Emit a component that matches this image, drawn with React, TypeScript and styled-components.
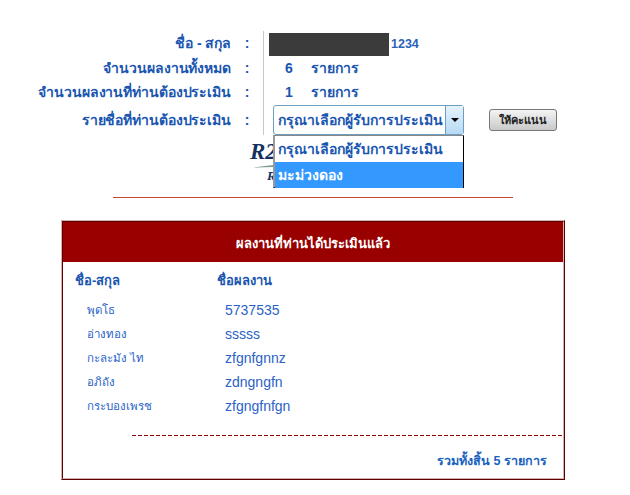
import styled, { createGlobalStyle } from 'styled-components';

const Global = createGlobalStyle`
    html, body {
        margin: 0;
        padding: 0;
        background: #fff;
        font-family: Tahoma, "Liberation Sans", "Noto Sans", "DejaVu Sans", sans-serif;
    }
`;

const Page = styled.div`
    width: 630px;
    height: 495px;
    overflow: hidden;
    padding-top: 31px;
    box-sizing: border-box;
`;

const Form = styled.div`
    display: grid;
    grid-template-columns: 231px 32px auto;
    height: 104px;
`;

const LabelCol = styled.div`
    display: flex;
    flex-direction: column;
    align-items: flex-end;
    padding-top: 3px;
`;

const ColonCol = styled(LabelCol)`
    align-items: center;
`;

const Label = styled.div<{ h: number }>`
    height: ${(props) => props.h}px;
    line-height: 18px;
    font-size: 14px;
    letter-spacing: -0.1px;
    font-weight: bold;
    color: #1a56b0;
    white-space: nowrap;
`;

const ValueCol = styled.div`
    border-left: 1px solid #c8c8c8;
    padding-left: 5px;
    position: relative;
`;

const NameRow = styled.div`
    display: flex;
    align-items: center;
    height: 24px;
    margin-top: 1px;
`;

const Redacted = styled.div`
    width: 120px;
    height: 23px;
    background: #3c3b3c;
    margin-right: 2px;
`;

const Code = styled.span`
    font-size: 12.5px;
    font-weight: bold;
    color: #2a62b8;
`;

const CountRow = styled.div`
    display: flex;
    height: 24px;
    line-height: 24px;
    font-size: 14px;
    font-weight: bold;
    color: #1a56b0;
`;

const Count = styled.span`
    width: 42px;
    padding-left: 16px;
    box-sizing: border-box;
`;

const SelectRow = styled.div`
    display: flex;
    align-items: center;
    margin: 1px 0 0 4px;
`;

const SelectBox = styled.div`
    width: 191px;
    height: 30px;
    box-sizing: border-box;
    border: 1px solid #6f9fc0;
    border-radius: 3px;
    display: flex;
    background: #fff;
`;

const SelectText = styled.div`
    flex: 1;
    padding-left: 4px;
    line-height: 28px;
    font-size: 14px;
    font-weight: bold;
    color: #1a56b0;
    white-space: nowrap;
`;

const SelectArrow = styled.div`
    width: 17px;
    border-left: 1px solid #6f9fc0;
    background: linear-gradient(#e6f2fb, #b6daf5);
    display: flex;
    align-items: center;
    justify-content: center;
    &::after {
        content: '';
        border-left: 4px solid transparent;
        border-right: 4px solid transparent;
        border-top: 4px solid #000;
    }
`;

const ScoreButton = styled.button`
    width: 68px;
    height: 22px;
    margin-left: 25px;
    padding: 0;
    border: 1px solid #777;
    border-radius: 3px;
    background: linear-gradient(#f4f4f4, #c9c9c9);
    font-family: inherit;
    font-size: 11px;
    font-weight: bold;
    color: #222;
`;

const Menu = styled.div`
    position: absolute;
    left: 9px;
    top: 104px;
    width: 191px;
    height: 53px;
    box-sizing: border-box;
    border: 1px solid #000;
    border-top-color: #888;
    border-left: 2px solid #999;
    background: #fff;
    z-index: 2;
`;

const MenuItem = styled.div<{ active?: boolean }>`
    height: 26px;
    line-height: 26px;
    padding-left: 3px;
    font-size: 14px;
    font-weight: bold;
    color: ${(props) => (props.active ? '#fff' : '#1a56b0')};
    background: ${(props) => (props.active ? '#3399ff' : 'transparent')};
    white-space: nowrap;
`;

const Logo = styled.div`
    position: absolute;
    left: -14px;
    top: 108px;
    width: 40px;
    height: 44px;
`;

const LogoText = styled.div`
    font-family: "Liberation Serif", serif;
    font-style: italic;
    font-weight: bold;
    font-size: 23px;
    line-height: 26px;
    color: #14305f;
`;

const Rule = styled.div`
    width: 400px;
    height: 1px;
    margin: 62px 0 0 113px;
    background: #c4483a;
`;

const Panel = styled.div`
    width: 504px;
    height: 260px;
    box-sizing: border-box;
    margin: 22px 0 0 61px;
    border: 1px solid;
    border-color: #d9b0b0 #5a0000 #5a0000 #d9b0b0;
`;

const PanelInner = styled.div`
    height: 100%;
    box-sizing: border-box;
    border: 1px solid;
    border-color: #5a0000 #d9b0b0 #d9b0b0 #5a0000;
    display: flex;
    flex-direction: column;
`;

const PanelHead = styled.div`
    height: 40px;
    line-height: 44px;
    background: #990000;
    color: #fff;
    font-size: 13px;
    font-weight: bold;
    text-align: center;
`;

const Table = styled.div`
    display: grid;
    grid-template-columns: 142px auto;
    padding: 8px 0 0 12px;
`;

const HeadCell = styled.div`
    height: 28px;
    line-height: 22px;
    font-size: 13px;
    font-weight: bold;
    color: #1a56b0;
`;

const NameCell = styled.div`
    height: 24px;
    line-height: 24px;
    padding-left: 12px;
    font-size: 11.5px;
    color: #2a62c8;
`;

const WorkCell = styled.div`
    height: 24px;
    line-height: 24px;
    padding-left: 8px;
    font-size: 14px;
    color: #2a62c8;
`;

const Dashed = styled.div`
    height: 1px;
    margin: 17px 0 0 69px;
    background: repeating-linear-gradient(90deg, #8b0000 0 4px, transparent 4px 6px);
`;

const Total = styled.div`
    margin-top: 15px;
    padding-right: 16px;
    text-align: right;
    font-size: 12.5px;
    font-weight: bold;
    color: #1a62c0;
`;

const rows = [
    ['พุดโธ', '5737535'],
    ['อ่างทอง', 'sssss'],
    ['กะละมัง ไท', 'zfgnfgnnz'],
    ['อภิถัง', 'zdngngfn'],
    ['กระบองเพรช', 'zfgngfnfgn'],
];

export default function App() {
    return (
        <Page>
            <Global />
            <Form>
                <LabelCol>
                    <Label h={25}>ชื่อ - สกุล</Label>
                    <Label h={24}>จำนวนผลงานทั้งหมด</Label>
                    <Label h={28}>จำนวนผลงานที่ท่านต้องประเมิน</Label>
                    <Label h={24}>รายชื่อที่ท่านต้องประเมิน</Label>
                </LabelCol>
                <ColonCol>
                    <Label h={25}>:</Label>
                    <Label h={24}>:</Label>
                    <Label h={28}>:</Label>
                    <Label h={24}>:</Label>
                </ColonCol>
                <ValueCol>
                    <NameRow>
                        <Redacted />
                        <Code>1234</Code>
                    </NameRow>
                    <CountRow>
                        <Count>6</Count>รายการ
                    </CountRow>
                    <CountRow>
                        <Count>1</Count>รายการ
                    </CountRow>
                    <SelectRow>
                        <SelectBox>
                            <SelectText>กรุณาเลือกผู้รับการประเมิน</SelectText>
                            <SelectArrow />
                        </SelectBox>
                        <ScoreButton>ให้คะแนน</ScoreButton>
                    </SelectRow>
                    <Logo>
                        <LogoText>R2</LogoText>
                        <svg width="40" height="18" viewBox="0 0 40 18">
                            <path d="M0 3 Q14 1 24 0 L24 2 Q12 2 0 3Z" fill="#7f9a96" />
                            <text x="17" y="15" fontFamily="Liberation Serif" fontStyle="italic" fontWeight="bold" fontSize="13" fill="#14305f">R</text>
                        </svg>
                    </Logo>
                    <Menu>
                        <MenuItem>กรุณาเลือกผู้รับการประเมิน</MenuItem>
                        <MenuItem active>มะม่วงดอง</MenuItem>
                    </Menu>
                </ValueCol>
            </Form>
            <Rule />
            <Panel>
                <PanelInner>
                    <PanelHead>ผลงานที่ท่านได้ประเมินแล้ว</PanelHead>
                    <Table>
                        <HeadCell>ชื่อ-สกุล</HeadCell>
                        <HeadCell>ชื่อผลงาน</HeadCell>
                        {rows.map((r) => (
                            <>
                                <NameCell>{r[0]}</NameCell>
                                <WorkCell>{r[1]}</WorkCell>
                            </>
                        ))}
                    </Table>
                    <Dashed />
                    <Total>รวมทั้งสิ้น 5 รายการ</Total>
                </PanelInner>
            </Panel>
        </Page>
    );
}
